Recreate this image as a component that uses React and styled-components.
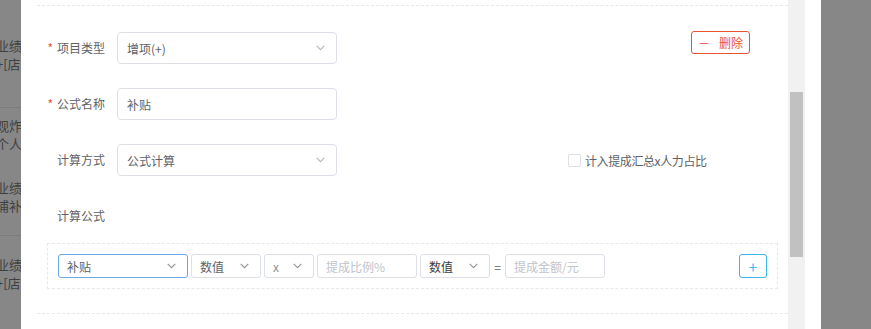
import React from 'react';
import styled, { createGlobalStyle } from 'styled-components';

const GlobalStyle = createGlobalStyle`
  html, body {
    margin: 0;
    padding: 0;
    background: #fff;
  }
  body {
    font-family: "Noto Sans CJK SC", "Noto Sans", "Liberation Sans", sans-serif;
    font-size: 12px;
    color: #606266;
  }
  * {
    box-sizing: border-box;
  }
`;

const Screen = styled.div`
  display: flex;
  width: 871px;
  height: 329px;
  overflow: hidden;
`;

const Backdrop = styled.div`
  flex: 0 0 ${(p) => p.width}px;
  height: 100%;
  background: #878787;
  overflow: hidden;
`;

const BackdropRow = styled.div`
  height: ${(p) => p.height}px;
  padding-top: ${(p) => p.top}px;
  border-bottom: ${(p) => (p.line ? '1px solid #7c7c7c' : 'none')};
  margin-left: -4px;
  white-space: nowrap;
  color: #3f3f3f;
  font-size: 13px;
  line-height: 18px;
`;

const BackdropLine = styled.div`
  height: ${(p) => (p.blank ? 26 : 18)}px;
`;

const Modal = styled.div`
  flex: 0 0 800px;
  display: flex;
  height: 100%;
  background: #fff;
  padding-right: 16px;
`;

const Body = styled.div`
  flex: 1;
  padding: 5px 0 0 16px;
`;

const Scrollbar = styled.div`
  flex: 0 0 17px;
  height: 100%;
  background: #f1f1f1;
  padding: 0 2px;
`;

const Thumb = styled.div`
  margin-top: 92px;
  height: 165px;
  background: #c1c1c1;
`;

const Item = styled.div`
  border-top: 1px dashed #e6e8eb;
  border-bottom: 1px dashed #e6e8eb;
  padding: 26px 0 24px;
`;

const Row = styled.div`
  display: flex;
  align-items: ${(p) => p.align || 'center'};
  height: 32px;
  margin-bottom: ${(p) => p.gap}px;
`;

const Label = styled.div`
  flex: 0 0 80px;
  padding-right: 12px;
  text-align: right;
  line-height: 32px;
  color: #606266;
  &::before {
    content: ${(p) => (p.required ? "'*'" : "''")};
    color: #f0522e;
    margin-right: 4px;
  }
`;

const Field = styled.div`
  display: flex;
  align-items: center;
  justify-content: space-between;
  width: ${(p) => p.width}px;
  height: ${(p) => (p.small ? 24 : 32)}px;
  padding: ${(p) => (p.small ? '0 11px 0 8px' : '0 11px 0 9px')};
  border: 1px solid ${(p) => (p.focused ? '#6aa7eb' : '#dcdfe6')};
  border-radius: ${(p) => (p.small ? 3 : 4)}px;
  background: #fff;
  color: ${(p) => p.color || '#606266'};
  white-space: nowrap;
  flex: none;
`;

const Placeholder = styled.span`
  color: #c0c4cc;
`;

const Chevron = ({ color = '#b4b7bd' }) => (
  <svg width="9" height="6" viewBox="0 0 9 6" fill="none">
    <path d="M0.7 0.8 L4.5 4.6 L8.3 0.8" stroke={color} strokeWidth="1.1" />
  </svg>
);

const Select = ({ value, chevron, ...rest }) => (
  <Field {...rest}>
    <span>{value}</span>
    <Chevron color={chevron} />
  </Field>
);

const DeleteButton = styled.button`
  margin: -1px 38px 0 auto;
  align-self: flex-start;
  width: 59px;
  height: 23px;
  padding: 0;
  border: 1px solid #e9532f;
  border-radius: 3px;
  background: #fff;
  color: #e9532f;
  font: inherit;
  font-size: 12px;
  display: flex;
  align-items: center;
  justify-content: center;
  gap: 9px;
`;

const CheckOption = styled.label`
  display: flex;
  align-items: center;
  gap: 4px;
  margin-left: 231px;
  color: #606266;
  font-size: 12px;
  letter-spacing: -0.4px;
`;

const CheckBox = styled.span`
  width: 13px;
  height: 13px;
  border: 1px solid #dcdfe6;
  border-radius: 2px;
  background: #fff;
`;

const FormulaBox = styled.div`
  display: flex;
  align-items: center;
  gap: 3px;
  margin: 0 10px;
  padding: 10px;
  border: 1px dashed #e6e8eb;
`;

const Equals = styled.span`
  width: 9px;
  text-align: center;
  color: #606266;
`;

const AddButton = styled.button`
  margin-left: auto;
  width: 28px;
  height: 24px;
  padding: 0;
  border: 1px solid #3ab5f0;
  border-radius: 3px;
  background: #fff;
  color: #4dbcf3;
  font: inherit;
  font-size: 16px;
  line-height: 20px;
`;

const backdropRows = [
  { height: 108, top: 37, line: true, lines: ['业绩]', '+[店'] },
  { height: 128, top: 9, line: true, lines: ['观炸', '个人', '', '业绩]', '浦补'] },
  { height: 93, top: 20, lines: ['业绩]', '+[店'] },
];

export default function App() {
  return (
    <>
      <GlobalStyle />
      <Screen>
        <Backdrop width={21}>
          {backdropRows.map((r, i) => (
            <BackdropRow key={i} height={r.height} top={r.top} line={r.line}>
              {r.lines.map((t, j) => (
                <BackdropLine key={j} blank={!t}>{t}</BackdropLine>
              ))}
            </BackdropRow>
          ))}
        </Backdrop>
        <Modal>
          <Body>
            <Item>
              <Row gap={24} align="flex-start">
                <Label required>项目类型</Label>
                <Select width={220} value="增项(+)" />
                <DeleteButton>
                  <span>－</span>
                  <span>删除</span>
                </DeleteButton>
              </Row>
              <Row gap={24}>
                <Label required>公式名称</Label>
                <Field width={220}>补贴</Field>
              </Row>
              <Row gap={24}>
                <Label>计算方式</Label>
                <Select width={220} value="公式计算" />
                <CheckOption>
                  <CheckBox />
                  计入提成汇总x人力占比
                </CheckOption>
              </Row>
              <Row gap={11}>
                <Label>计算公式</Label>
              </Row>
              <FormulaBox>
                <Select small focused width={130} value="补贴" chevron="#909399" />
                <Select small width={70} value="数值" chevron="#909399" />
                <Select small width={50} value="x" color="#909399" chevron="#909399" />
                <Field small width={100}>
                  <Placeholder>提成比例%</Placeholder>
                </Field>
                <Select small width={70} value="数值" color="#3a3d42" chevron="#909399" />
                <Equals>=</Equals>
                <Field small width={100}>
                  <Placeholder>提成金额/元</Placeholder>
                </Field>
                <AddButton>+</AddButton>
              </FormulaBox>
            </Item>
          </Body>
          <Scrollbar>
            <Thumb />
          </Scrollbar>
        </Modal>
        <Backdrop width={50} />
      </Screen>
    </>
  );
}
